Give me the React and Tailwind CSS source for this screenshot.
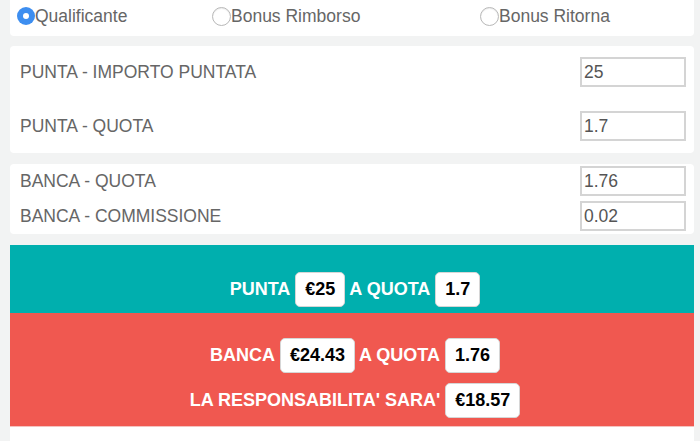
const FONT = { fontFamily: '"Liberation Sans", Arial, sans-serif' };

function Radio({ checked, label, className = "" }) {
  return (
    <label className={`flex items-center ${className}`}>
      {checked ? (
        <span className="w-[18px] h-[18px] rounded-full bg-[#3d8ef0] flex items-center justify-center">
          <span className="w-[6px] h-[6px] rounded-full bg-white" />
        </span>
      ) : (
        <span className="w-[19px] h-[19px] rounded-full border border-[#b8b8b8] bg-white shadow-[inset_0_1px_1px_rgba(0,0,0,0.08)]" />
      )}
      <span className="text-[17.5px] text-[#666]">{label}</span>
    </label>
  );
}

function Field({ label, value }) {
  return (
    <div className="flex items-center justify-between">
      <span className="text-[17.5px] text-[#666]">{label}</span>
      <input
        readOnly
        value={value}
        className="w-[106px] h-[30px] border-2 border-[#d4d4d4] bg-white px-[2px] text-[17.5px] text-[#555] outline-none"
        style={FONT}
      />
    </div>
  );
}

function Pill({ children }) {
  return (
    <span className="inline-flex items-center h-[35px] px-[9px] ml-[5px] mr-[4px] rounded-[5px] bg-white border border-[#d6d6d6] text-black font-bold text-[18px]">
      {children}
    </span>
  );
}

export default function App() {
  return (
    <div className="w-[700px] h-[441px] overflow-hidden bg-[#f2f3f3] pl-[10px] pr-[6px]" style={FONT}>
      {/* tipo di scommessa */}
      <div className="bg-white rounded-b-[4px] h-[36px] flex items-center pl-[7px] pb-[4px]">
        <Radio checked label="Qualificante" className="w-[195px]" />
        <Radio label="Bonus Rimborso" className="w-[268px]" />
        <Radio label="Bonus Ritorna" />
      </div>

      {/* punta */}
      <div className="mt-[10px] bg-white rounded-[4px] h-[107px] pl-[10px] pr-[8px] pt-[11px] flex flex-col gap-[24px]">
        <Field label="PUNTA - IMPORTO PUNTATA" value="25" />
        <Field label="PUNTA - QUOTA" value="1.7" />
      </div>

      {/* banca */}
      <div className="mt-[11px] bg-white rounded-[4px] h-[70px] pl-[10px] pr-[8px] pt-[2px] flex flex-col gap-[5px]">
        <Field label="BANCA - QUOTA" value="1.76" />
        <Field label="BANCA - COMMISSIONE" value="0.02" />
      </div>

      {/* risultati */}
      <div className="mt-[11px] bg-[#00afae] h-[68px] flex items-center justify-center pt-[20px] pl-[10px] text-white font-bold text-[18px]">
        <span>PUNTA</span>
        <Pill>€25</Pill>
        <span>A QUOTA</span>
        <Pill>1.7</Pill>
      </div>
      <div className="bg-[#f05850] h-[113px] flex flex-col items-center pt-[25px] pl-[10px] gap-[10px] text-white font-bold text-[18px]">
        <div className="flex items-center">
          <span>BANCA</span>
          <Pill>€24.43</Pill>
          <span>A QUOTA</span>
          <Pill>1.76</Pill>
        </div>
        <div className="flex items-center">
          <span>LA RESPONSABILITA' SARA'</span>
          <Pill>€18.57</Pill>
        </div>
      </div>
      <div className="bg-white h-[20px] border-t border-[#f5c2bf]" />
    </div>
  );
}
